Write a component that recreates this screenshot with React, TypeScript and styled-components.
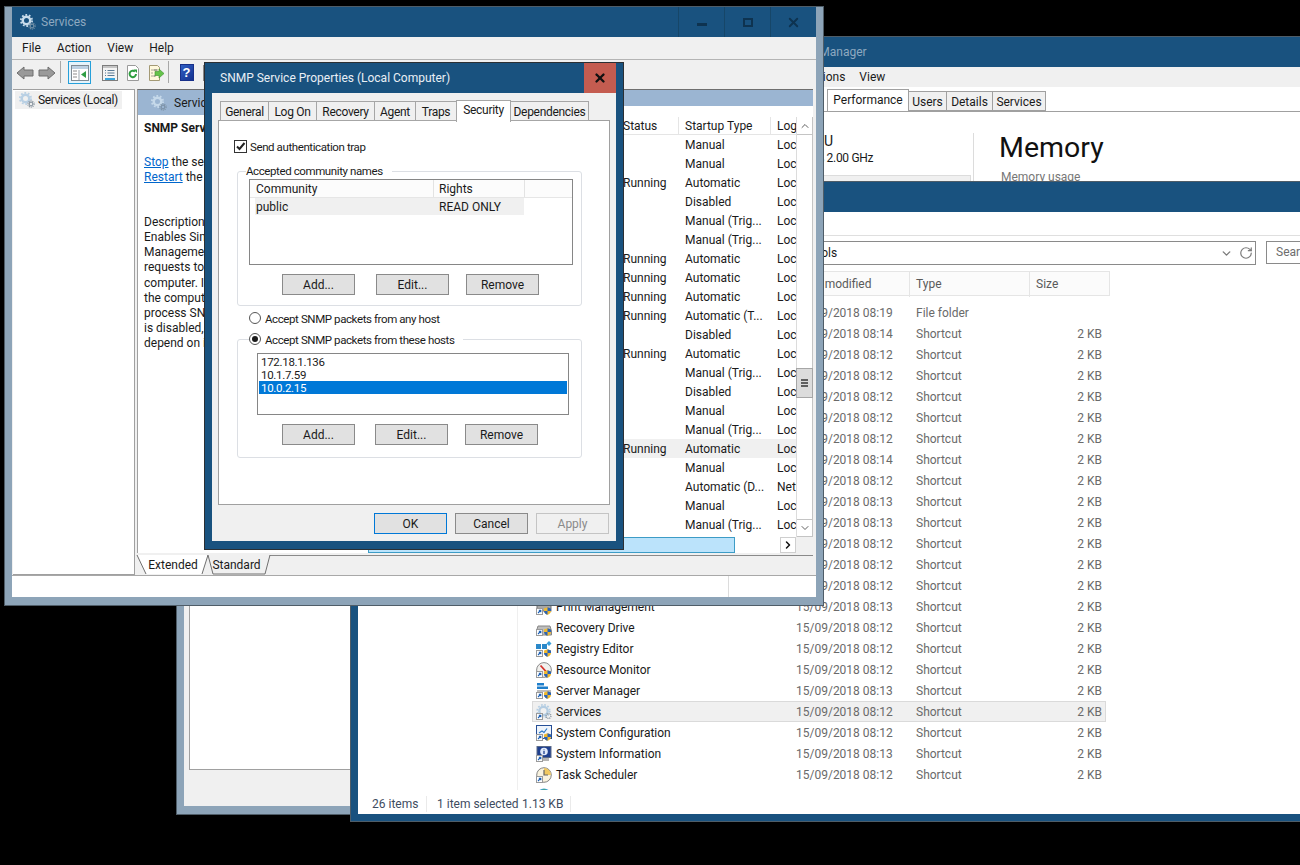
import React from 'react';
import styled, { createGlobalStyle } from 'styled-components';
import { ChevronUp, ChevronDown, ChevronRight, RotateCw, X } from 'lucide-react';

const FONT = `Roboto, "Noto Sans", sans-serif`;

const GlobalStyle = createGlobalStyle`
  html, body { margin: 0; padding: 0; background: #000; }
  * { box-sizing: border-box; }
  body { font-family: ${FONT}; font-size: 12px; color: #1a1a1a; }
`;

const BLUE = '#19527f';
const GREY_FRAME = '#8da4b8';

/* ---------- icons ---------- */

const Gears: React.FC<{ size?: number; big?: string; small?: string }> = ({ size = 16, big = '#b9d0e4', small = '#8e99a3' }) => (
  <svg width={size} height={size} viewBox="0 0 16 16" style={{ flex: 'none' }}>
    <circle cx="6.5" cy="6.5" r="5.6" fill="none" stroke={big} strokeWidth="1.8" strokeDasharray="1.7 1.82" />
    <circle cx="6.5" cy="6.5" r="3.7" fill="none" stroke={big} strokeWidth="2.4" />
    <circle cx="12" cy="12" r="3.1" fill="none" stroke={small} strokeWidth="1.2" strokeDasharray="1.1 0.85" />
    <circle cx="12" cy="12" r="1.8" fill="none" stroke={small} strokeWidth="1.2" />
  </svg>
);

const Arrow: React.FC<{ flip?: boolean }> = ({ flip }) => (
  <svg width="18" height="16" viewBox="0 0 18 16" style={flip ? { transform: 'scaleX(-1)' } : undefined}>
    <path d="M1 8 L8 2 V5 H17 V11 H8 V14 Z" fill="#9a9a9a" stroke="#6e6e6e" />
  </svg>
);

const TreeIcon = () => (
  <svg width="18" height="16" viewBox="0 0 18 16">
    <rect x="0.5" y="0.5" width="17" height="15" fill="#fff" stroke="#7f8a93" />
    <rect x="1" y="1" width="16" height="3" fill="#bcd0e2" />
    <path d="M2 6h4M2 9h4M2 12h4" stroke="#8d8d8d" />
    <path d="M8 5v10" stroke="#9aa5ad" />
    <path d="M15 6v7l-5-3.5z" fill="#2f9e44" />
  </svg>
);

const PropsIcon = () => (
  <svg width="16" height="16" viewBox="0 0 16 16">
    <rect x="0.5" y="0.5" width="15" height="15" fill="#f4f4f4" stroke="#7d7d7d" />
    <rect x="1" y="1" width="14" height="2" fill="#c5c5c5" />
    <path d="M3 5.5h1M5.5 5.5h7M3 8h1M5.5 8h7M3 10.5h1M5.5 10.5h7" stroke="#5b7a95" />
    <rect x="3" y="13" width="10" height="2" fill="#3aa5dd" />
  </svg>
);

const RefreshIcon = () => (
  <svg width="16" height="16" viewBox="0 0 16 16">
    <path d="M2.5 0.5h8l3 3v12h-11z" fill="#fff" stroke="#9a9a9a" />
    <path d="M11 9a3.2 3.2 0 1 1-1-2.4" fill="none" stroke="#2e9e3f" strokeWidth="2" />
    <path d="M8.5 4.5h3.5v3.5z" fill="#2e9e3f" />
  </svg>
);

const ExportIcon = () => (
  <svg width="17" height="16" viewBox="0 0 17 16">
    <path d="M1.5 0.5h8l2 2v13h-10z" fill="#fff9dd" stroke="#a49a75" />
    <path d="M3.5 5h1M5.5 5h4M3.5 8h1M3.5 11h1M5.5 11h2" stroke="#555" />
    <path d="M7 6.5h4V4l5 4.5L11 13v-2.500H7z" fill="#65c34a" stroke="#3d8f2f" strokeWidth="0.6" />
  </svg>
);

const HelpIcon = styled.span`
  display: block;
  width: 14px;
  height: 17px;
  background: linear-gradient(135deg, #2f5fc4, #14318f);
  border: 1px solid #18308a;
  color: #fff;
  font: bold 13px/15px "Liberation Sans", sans-serif;
  text-align: center;
`;

const SmallDoc = () => (
  <svg width="14" height="16" viewBox="0 0 14 16">
    <rect x="0.5" y="0.5" width="13" height="15" fill="#eee" stroke="#888" />
    <path d="M3 5h8M3 8h8M3 11h8" stroke="#999" />
  </svg>
);

const Overlay: React.FC<{ shield?: boolean }> = ({ shield = true }) => (
  <>
    <rect x="0.5" y="9.500" width="6" height="6" fill="#fff" stroke="#9a9a9a" />
    <path d="M2 14l2.500-2.500M2.800 11.300h2v2" fill="none" stroke="#1b5fb5" strokeWidth="1.100" />
    {shield && (
      <>
        <path d="M8 9.500l3.500-1.300L15 9.500v2.500c0 2-1.500 3-3.500 3.800C9.500 15 8 14 8 12z" fill="#f1b92c" />
        <path d="M11.500 8.200L15 9.500V12h-3.500zM11.500 12v3.800C9.500 15 8 14 8 12z" fill="#2a63b7" />
      </>
    )}
  </>
);

const FILE_ICONS: Record<string, React.ReactNode> = {
  print: (
    <>
      <path d="M3 3h10v3H3z" fill="#f5f5f5" stroke="#888" />
      <rect x="1" y="6" width="14" height="6" fill="#a6a6a6" stroke="#707070" />
      <Overlay />
    </>
  ),
  drive: (
    <>
      <path d="M2 6h12l1.500 5v4h-15v-4z" fill="#bdbdbd" stroke="#868686" />
      <Overlay />
    </>
  ),
  registry: (
    <>
      <path d="M0 3h5v5H0zM6 3h5v5H6zM0 9h5v5H0z" fill="#2a88c9" />
      <path d="M13 0l2.500 2.500L13 5l-2.500-2.500z" fill="#3ba0dc" />
      <Overlay />
    </>
  ),
  monitor: (
    <>
      <circle cx="8" cy="8" r="7.400" fill="#f1f1ee" stroke="#8b8b8b" />
      <path d="M4.500 3.500L10 9.500" stroke="#d4302a" strokeWidth="1.800" />
      <Overlay />
    </>
  ),
  server: (
    <>
      <rect x="1" y="0" width="7" height="2.500" fill="#1f7fcb" />
      <rect x="1" y="3.500" width="11" height="2.500" fill="#1f7fcb" />
      <rect x="1" y="7" width="14" height="2" fill="#bdbdbd" />
      <Overlay />
    </>
  ),
  gears: (
    <>
      <circle cx="7.500" cy="7" r="6.300" fill="none" stroke="#b4cde2" strokeWidth="1.600" strokeDasharray="1.700 1.600" />
      <circle cx="7.500" cy="7" r="4.200" fill="none" stroke="#b4cde2" strokeWidth="2.400" />
      <circle cx="12.500" cy="12" r="2.400" fill="none" stroke="#8e99a3" strokeWidth="1.400" strokeDasharray="1 0.700" />
      <Overlay shield={false} />
    </>
  ),
  config: (
    <>
      <rect x="0.500" y="0.500" width="15" height="13" fill="#eef4fb" stroke="#274f96" />
      <path d="M3 8l3-2 2 1.500 3-4" fill="none" stroke="#2a79c9" strokeWidth="1.200" />
      <Overlay />
    </>
  ),
  info: (
    <>
      <rect x="1" y="0.500" width="14" height="11" fill="#1e3f8f" stroke="#5a6a88" />
      <circle cx="8" cy="5.500" r="3.800" fill="#dfe9fa" />
      <path d="M8 3.500v.800M8 5v3" stroke="#1e3f8f" strokeWidth="1.300" />
      <rect x="3" y="12" width="10" height="3" fill="#b5b5b5" />
      <Overlay shield={false} />
    </>
  ),
  clock: (
    <>
      <circle cx="8" cy="8" r="7.300" fill="#f8f2de" stroke="#858585" />
      <path d="M8 1v7h7a7 7 0 0 0-7-7z" fill="#f0c860" />
      <path d="M8 3v5H12" fill="none" stroke="#666" strokeWidth="1.200" />
      <Overlay shield={false} />
    </>
  ),
  globe: (
    <>
      <circle cx="8" cy="8" r="7.500" fill="#3d9fd8" />
      <path d="M4 3c3-2 5-2 8 0-2 2-6 2-8 0z" fill="#4bb04a" />
    </>
  ),
};

/* ---------- windows ---------- */

const Desktop = styled.div`
  position: relative;
  width: 1300px;
  height: 865px;
  overflow: hidden;
  background: #000;
`;

const Window = styled.div<{ $frame?: string }>`
  position: absolute;
  display: flex;
  flex-direction: column;
  padding: 0 7px 8px;
  border: 1px solid #4f5d68;
  background: ${p => p.$frame ?? BLUE};
`;

const ServicesWindow = styled(Window)`
  left: 4px;
  top: 6px;
  width: 820px;
  height: 600px;
  z-index: 4;
`;

const DialogWindow = styled(Window)`
  left: 204px;
  top: 62px;
  width: 420px;
  height: 488px;
  z-index: 5;
  border-color: #2b2f33;
`;

const BackWindow = styled(Window)`
  left: 176px;
  top: 420px;
  width: 300px;
  height: 395px;
  z-index: 1;
`;

const TaskWindow = styled(Window)`
  left: 755px;
  top: 36px;
  width: 655px;
  height: 220px;
  z-index: 2;
`;

const ExplorerWindow = styled(Window)`
  left: 350px;
  top: 181px;
  width: 1050px;
  height: 641px;
  padding-bottom: 7px;
  z-index: 3;
`;

const TitleBar = styled.div<{ $active?: boolean }>`
  flex: none;
  display: flex;
  align-items: center;
  height: 30px;
  background: ${BLUE};
  color: ${p => (p.$active ? '#e9eff5' : '#8ea9c0')};
  padding-left: 8px;
`;

const TaskTitle = styled(TitleBar)`
  padding-left: 28px;
`;

const TitleIcon = styled.span`
  display: flex;
  margin-right: 5px;
`;

const TitleSpacer = styled.div`
  flex: 1;
`;

const CaptionButton = styled.div`
  width: 46px;
  height: 30px;
  display: flex;
  align-items: center;
  justify-content: center;
  border-left: 1px solid #164668;
  color: #0e3350;
`;

const MinGlyph = styled.span`
  display: block;
  width: 10px;
  height: 3px;
  margin-top: 4px;
  background: #0e3350;
`;

const MaxGlyph = styled.span`
  display: block;
  width: 10px;
  height: 9px;
  border: 2px solid #0e3350;
`;

const CloseButton = styled.div`
  width: 32px;
  height: 30px;
  display: flex;
  align-items: center;
  justify-content: center;
  background: #c45c50;
  color: #111;
`;

const Client = styled.div`
  flex: 1;
  min-height: 0;
  display: flex;
  flex-direction: column;
  background: #f0f0f0;
`;

/* ---------- back window ---------- */

const BackClient = styled(Client)`
  padding: 0 0 36px 5px;
`;

const BackPanel = styled.div`
  flex: 1;
  background: #fff;
  border: 1px solid #a0a0a0;
`;

/* ---------- services window ---------- */

const MenuBar = styled.div`
  flex: none;
  display: flex;
  align-items: center;
  height: 23px;
  padding-left: 10px;
  gap: 16px;
  background: #f0f0f0;
  border-bottom: 1px solid #b4b4b4;
`;

const Toolbar = styled.div`
  flex: none;
  display: flex;
  align-items: flex-start;
  height: 29px;
  padding: 1px 0 0 2px;
  background: #f0f0f0;
`;

const ToolSlot = styled.div<{ $w?: number; $ml?: number; $on?: boolean }>`
  flex: none;
  width: ${p => p.$w ?? 23}px;
  height: 23px;
  margin-left: ${p => p.$ml ?? 0}px;
  display: flex;
  align-items: center;
  justify-content: center;
  ${p => p.$on && 'background: #e5f3fb; border: 1px solid #26a0da;'}
`;

const ToolSep = styled.div<{ $ml: number }>`
  flex: none;
  width: 1px;
  height: 22px;
  margin-left: ${p => p.$ml}px;
  background: #a8a8a8;
`;

const MmcBody = styled.div`
  flex: 1;
  min-height: 0;
  display: flex;
  gap: 2px;
  padding-left: 1px;
`;

const TreePane = styled.div`
  flex: none;
  width: 122px;
  background: #fff;
  border: 1px solid #a0a0a0;
  border-width: 1px 1px 1px 0;
  padding: 1px 0 0 2px;
`;

const TreeItem = styled.div`
  display: flex;
  align-items: center;
  gap: 3px;
  width: 107px;
  height: 18px;
  padding-left: 4px;
  background: #f0f0f0;
  white-space: nowrap;
  letter-spacing: -0.35px;
`;

const ResultPane = styled.div`
  flex: 1;
  min-width: 0;
  display: flex;
  flex-direction: column;
  padding-right: 3px;
`;

const ResultInner = styled.div`
  flex: 1;
  min-height: 0;
  display: flex;
  background: #fff;
  border-left: 1px solid #a0a0a0;
  border-top: 1px solid #6f6f6f;
`;

const DescColumn = styled.div`
  flex: none;
  width: 222px;
  display: flex;
  flex-direction: column;
  overflow: hidden;
`;

const DescBand = styled.div`
  flex: none;
  display: flex;
  align-items: center;
  gap: 7px;
  height: 25px;
  padding-left: 13px;
  background: #9bb5d2;
  white-space: nowrap;
`;

const DescBody = styled.div`
  padding: 6px 6px 0;
  line-height: 15.100px;
  white-space: nowrap;
`;

const DescName = styled.div`
  font-weight: 700;
  height: 16px;
  margin-bottom: 18px;
`;

const DescLink = styled.a`
  color: #0066cc;
  text-decoration: underline;
`;

const DescGap = styled.div`
  height: 30px;
`;

const ListColumn = styled.div`
  flex: 1;
  min-width: 0;
  display: flex;
  flex-direction: column;
`;

const ListBand = styled.div`
  flex: none;
  height: 16px;
  background: #9bb5d2;
`;

const ListFrame = styled.div`
  flex: none;
  display: flex;
  height: 420px;
  margin-top: 11px;
`;

const ServiceTable = styled.div`
  flex: 1;
  min-width: 0;
`;

const ServiceRow = styled.div<{ $on?: boolean; $head?: boolean }>`
  display: grid;
  grid-template-columns: 257px 62px 92px 26px;
  align-items: center;
  height: ${p => (p.$head ? 18 : 19)}px;
  background: ${p => (p.$on ? '#f0f0f0' : 'transparent')};
  ${p => p.$head && 'border-bottom: 1px solid #e5e5e5;'}
`;

const ServiceCell = styled.div<{ $head?: boolean }>`
  overflow: hidden;
  white-space: nowrap;
  padding-left: 6px;
  line-height: 18px;
  ${p => p.$head && 'border-right: 1px solid #e5e5e5;'}
`;

const VScroll = styled.div`
  flex: none;
  width: 17px;
  display: flex;
  flex-direction: column;
  border-left: 1px solid #dcdcdc;
  border-right: 1px solid #c4c4c4;
`;

const ScrollBtn = styled.div`
  flex: none;
  height: 18px;
  display: flex;
  align-items: center;
  justify-content: center;
  color: #606060;
  border-bottom: 1px solid #c4c4c4;
`;

const ScrollDownBtn = styled(ScrollBtn)`
  border-bottom: 1px solid #c4c4c4;
  border-top: 1px solid #c4c4c4;
`;

const VTrack = styled.div`
  flex: 1;
  padding-top: 233px;
`;

const VThumb = styled.div`
  height: 30px;
  margin: 0 -1px;
  display: flex;
  flex-direction: column;
  align-items: center;
  justify-content: center;
  gap: 1px;
  background: #dcdcdc;
  border: 1px solid #a6a6a6;
`;

const Grip = styled.span`
  display: block;
  width: 7px;
  height: 2px;
  background: #606060;
`;

const HScroll = styled.div`
  flex: none;
  display: flex;
  align-items: stretch;
  height: 16px;
`;

const HThumb = styled.div`
  flex: none;
  width: 367px;
  margin-left: 8px;
  background: #bbe3fb;
  border: 1px solid #3d9cc6;
`;

const HBlank = styled.div`
  flex: 1;
`;

const HArrow = styled.div`
  flex: none;
  width: 16px;
  display: flex;
  align-items: center;
  justify-content: center;
  color: #111;
  background: #fff;
  border: 1px solid #cfcfcf;
`;

const HCorner = styled.div`
  flex: none;
  width: 17px;
  background: #f0f0f0;
`;

const ViewTabs = styled.div`
  flex: none;
  display: flex;
  height: 20px;
  margin-top: 2px;
  border-top: 1px solid #8a8a8a;
  background: #f0f0f0;
`;

const ViewTab = styled.div<{ $w: number; $ml?: number }>`
  position: relative;
  flex: none;
  width: ${p => p.$w}px;
  margin-left: ${p => p.$ml ?? 0}px;
  display: flex;
  align-items: center;
  justify-content: center;
  height: 20px;
  margin-top: -1px;
  svg { position: absolute; left: 0; top: 0; overflow: visible; }
  span { position: relative; }
`;

const MmcStatus = styled.div`
  flex: none;
  display: flex;
  justify-content: flex-end;
  height: 22px;
  background: #fff;
  border-top: 1px solid #a8a8a8;
  padding-right: 3px;
`;

const MmcStatusCell = styled.div`
  width: 85px;
  border-left: 1px solid #dcdcdc;
`;

/* ---------- dialog ---------- */

const DialogTabs = styled.div`
  flex: none;
  display: flex;
  align-items: flex-end;
  height: 28px;
  padding-left: 8px;
`;

const DialogTab = styled.div<{ $w: number; $on?: boolean }>`
  position: relative;
  z-index: ${p => (p.$on ? 2 : 0)};
  flex: none;
  width: ${p => p.$w}px;
  height: ${p => (p.$on ? 22 : 20)}px;
  margin-bottom: ${p => (p.$on ? -1 : 0)}px;
  margin-right: -1px;
  display: flex;
  align-items: ${p => (p.$on ? 'flex-start' : 'center')};
  justify-content: center;
  padding-top: 2px;
  letter-spacing: -0.3px;
  background: ${p => (p.$on ? '#fff' : '#f0f0f0')};
  border: 1px solid #a6a6a6;
  ${p => p.$on && 'border-bottom: 0;'}
`;

const DialogPanel = styled.div`
  flex: none;
  height: 385px;
  margin: -1px 6px 0;
  padding: 18px 0 0 15px;
  background: #fff;
  border: 1px solid #a0a0a0;
`;

const LabelText = styled.span`
  font-size: 11.5px;
  letter-spacing: -0.4px;
  padding-top: 1px;
  white-space: nowrap;
`;

const CheckRow = styled.label`
  display: flex;
  align-items: center;
  gap: 3px;
  height: 14px;
`;

const CheckBox = styled.span`
  display: block;
  flex: none;
  width: 13px;
  height: 13px;
  background: #fff;
  border: 1px solid #333;
`;

const Group = styled.fieldset<{ $mt: number; $pb: number }>`
  width: 345px;
  margin: ${p => p.$mt}px 0 0 3px;
  padding: 0 0 ${p => p.$pb}px 0;
  border: 1px solid #dcdfe4;
  border-radius: 3px;
  min-inline-size: 0;
`;

const Legend = styled.legend<{ $ml: number }>`
  margin-left: ${p => p.$ml}px;
  padding: 0 9px 0 0;
  line-height: 14px;
  height: 14px;
`;

const CommunityBox = styled.div`
  width: 324px;
  height: 86px;
  margin: 1px 0 0 11px;
  background: #fff;
  border: 1px solid #868686;
`;

const CommunityHead = styled.div`
  display: grid;
  grid-template-columns: 183px 91px 1fr;
  height: 18px;
  padding-left: 1px;
  border-bottom: 1px solid #e6e6e6;
  background: #fcfcfc;
`;

const HeadCell = styled.div`
  padding: 2px 0 0 5px;
  line-height: 15px;
  border-right: 1px solid #e3e3e3;
`;

const CommunityRow = styled.div`
  display: grid;
  grid-template-columns: 179px 90px;
  width: 269px;
  height: 17px;
  margin-left: 5px;
  line-height: 19px;
  background: #f0f0f0;
`;

const CommunityCell = styled.div`
  padding-left: 1px;
  &:last-child { padding-left: 5px; }
`;

const ButtonRow = styled.div<{ $mt: number }>`
  display: flex;
  margin: ${p => p.$mt}px 0 0 44px;
`;

const PushButton = styled.div<{ $ml?: number; $kind?: 'default' | 'disabled' }>`
  flex: none;
  width: 73px;
  height: 21px;
  margin-left: ${p => p.$ml ?? 0}px;
  display: flex;
  align-items: center;
  justify-content: center;
  background: ${p => (p.$kind === 'disabled' ? '#f0f0f0' : '#e1e1e1')};
  color: ${p => (p.$kind === 'disabled' ? '#8a8a8a' : '#1a1a1a')};
  border: 1px solid ${p => (p.$kind === 'default' ? '#0078d7' : p.$kind === 'disabled' ? '#c4c4c4' : '#8a8a8a')};
`;

const RadioRow = styled.label<{ $mt?: number; $ml?: number }>`
  display: flex;
  align-items: center;
  gap: 4px;
  height: 14px;
  margin: ${p => p.$mt ?? 0}px 0 0 ${p => p.$ml ?? 0}px;
`;

const Radio = styled.span<{ $on?: boolean }>`
  display: flex;
  flex: none;
  align-items: center;
  justify-content: center;
  width: 12px;
  height: 12px;
  border-radius: 50%;
  background: #fff;
  border: 1px solid #555;
  &::after {
    content: '';
    display: ${p => (p.$on ? 'block' : 'none')};
    width: 6px;
    height: 6px;
    border-radius: 50%;
    background: #1a1a1a;
  }
`;

const HostBox = styled.div`
  width: 312px;
  height: 62px;
  margin: 7px 0 0 19px;
  padding: 1px;
  background: #fff;
  border: 1px solid #868686;
`;

const HostItem = styled.div<{ $on?: boolean }>`
  height: 13px;
  padding-left: 2px;
  font-size: 11.5px;
  letter-spacing: -0.3px;
  line-height: 15px;
  background: ${p => (p.$on ? '#0078d7' : 'transparent')};
  color: ${p => (p.$on ? '#fff' : '#1a1a1a')};
`;

const DialogFoot = styled.div`
  flex: none;
  display: flex;
  justify-content: flex-end;
  gap: 8px;
  margin-top: 8px;
  padding-right: 7px;
`;

/* ---------- task manager ---------- */

const TaskMenu = styled(MenuBar)`
  height: 20px;
  border-bottom: 0;
  gap: 14px;
  padding-left: 8px;
`;

const TaskTabs = styled.div`
  flex: none;
  display: flex;
  align-items: flex-end;
  height: 25px;
  padding-left: 64px;
  background: #fff;
  border-bottom: 1px solid #a0a0a0;
`;

const TaskTab = styled.div<{ $w: number; $on?: boolean }>`
  position: relative;
  flex: none;
  width: ${p => p.$w}px;
  height: ${p => (p.$on ? 23 : 20)}px;
  margin-bottom: ${p => (p.$on ? -1 : 0)}px;
  margin-right: -1px;
  z-index: ${p => (p.$on ? 2 : 0)};
  display: flex;
  align-items: ${p => (p.$on ? 'flex-start' : 'center')};
  justify-content: center;
  padding-top: ${p => (p.$on ? 3 : 1)}px;
  background: ${p => (p.$on ? '#fff' : '#f0f0f0')};
  border: 1px solid #a0a0a0;
`;

const PerfBody = styled.div`
  flex: 1;
  display: flex;
  background: #fff;
`;

const PerfSide = styled.div`
  flex: none;
  width: 211px;
  padding-left: 55px;
  border-right: 1px solid #dcdcdc;
  margin-top: 21px;
`;

const PerfName = styled.div`
  font-size: 14px;
  line-height: 17px;
  margin-left: -12px;
`;

const PerfSpeed = styled.div`
  line-height: 16px;
  margin-left: -9px;
  letter-spacing: -0.3px;
  white-space: nowrap;
`;

const PerfGraph = styled.div`
  height: 30px;
  margin: 9px 2px 0 0;
  background: #f0f0f0;
  border: 1px solid #dcdcdc;
`;

const PerfMain = styled.div`
  padding: 17px 0 0 25px;
`;

const PerfHeading = styled.div`
  font-size: 28.5px;
  line-height: 38px;
  color: #111;
`;

const PerfSub = styled.div`
  margin: 3px 0 0 2px;
  color: #777;
`;

/* ---------- explorer ---------- */

const ExplorerClient = styled(Client)`
  background: #fff;
`;

const Ribbon = styled.div`
  flex: none;
  height: 24px;
  border-bottom: 1px solid #dfdfdf;
`;

const AddressRow = styled.div`
  flex: none;
  display: flex;
  align-items: flex-start;
  height: 35px;
  padding: 5px 0 0 342px;
`;

const AddressBox = styled.div`
  flex: none;
  width: 556px;
  height: 24px;
  display: flex;
  align-items: center;
  padding: 0 2px 0 27px;
  border: 1px solid #8a8a8a;
`;

const AddressTail = styled.div`
  display: flex;
  align-items: center;
  gap: 6px;
  margin-left: auto;
  color: #7a7a7a;
`;

const SearchBox = styled.div`
  flex: none;
  width: 200px;
  height: 23px;
  margin-left: 10px;
  padding-left: 9px;
  line-height: 21px;
  color: #6d6d6d;
  border: 1px solid #8a8a8a;
`;

const ColumnHead = styled.div`
  flex: none;
  display: grid;
  grid-template-columns: 119px 120px 81px;
  width: 320px;
  height: 25px;
  margin-left: 432px;
  background: #fbfbfb;
  border: 1px solid #e5e5e5;
  color: #5a5a5a;
`;

const ColumnCell = styled.div`
  padding-left: 6px;
  line-height: 25px;
  border-right: 1px solid #e5e5e5;
  &:last-child { border-right: 0; }
`;

const ExplorerBody = styled.div`
  flex: 1;
  min-height: 0;
  display: flex;
`;

const NavPane = styled.div`
  flex: none;
  width: 160px;
  border-right: 1px solid #efefef;
`;

const FileList = styled.div`
  flex: 1;
  min-width: 0;
  overflow: hidden;
  padding: 6px 0 0 14px;
`;

const FileRow = styled.div<{ $on?: boolean }>`
  display: grid;
  grid-template-columns: 263px 120px 120px 66px;
  align-items: center;
  width: 574px;
  height: 21px;
  border: 1px solid ${p => (p.$on ? '#dadada' : 'transparent')};
  background: ${p => (p.$on ? '#f0f0f0' : 'transparent')};
  white-space: nowrap;
`;

const FileName = styled.div`
  display: flex;
  align-items: center;
  gap: 4px;
  padding-left: 3px;
  height: 19px;
`;

const FileMeta = styled.div`
  color: #6a6a6a;
`;

const FileSize = styled(FileMeta)`
  text-align: right;
`;

const ExplorerStatus = styled.div`
  flex: none;
  display: flex;
  align-items: center;
  height: 24px;
  padding: 4px 0 0 14px;
  color: #3e4c5f;
`;

const StatusText = styled.span<{ $w: number }>`
  flex: none;
  width: ${p => p.$w}px;
`;

const StatusSep = styled.span<{ $mr: number }>`
  flex: none;
  width: 1px;
  height: 16px;
  margin-right: ${p => p.$mr}px;
  background: #eaeaea;
`;

/* ---------- data ---------- */

const SERVICES: [string, string, string, boolean?][] = [
  ['', 'Manual', 'Local Service'],
  ['', 'Manual', 'Local Service'],
  ['Running', 'Automatic', 'Local Service'],
  ['', 'Disabled', 'Local Service'],
  ['', 'Manual (Trig...', 'Local Service'],
  ['', 'Manual (Trig...', 'Local Service'],
  ['Running', 'Automatic', 'Local Service'],
  ['Running', 'Automatic', 'Local Service'],
  ['Running', 'Automatic', 'Local Service'],
  ['Running', 'Automatic (T...', 'Local Service'],
  ['', 'Disabled', 'Local Service'],
  ['Running', 'Automatic', 'Local Service'],
  ['', 'Manual (Trig...', 'Local Service'],
  ['', 'Disabled', 'Local Service'],
  ['', 'Manual', 'Local Service'],
  ['', 'Manual (Trig...', 'Local Service'],
  ['Running', 'Automatic', 'Local Service', true],
  ['', 'Manual', 'Local Service'],
  ['', 'Automatic (D...', 'Network Service'],
  ['', 'Manual', 'Local Service'],
  ['', 'Manual (Trig...', 'Local Service'],
];

type FileEntry = { name?: string; icon?: string; time: string; on?: boolean };

const FILES: FileEntry[] = [
  { time: '08:14' }, { time: '08:12' }, { time: '08:12' }, { time: '08:12' }, { time: '08:12' },
  { time: '08:12' }, { time: '08:14' }, { time: '08:12' }, { time: '08:13' }, { time: '08:13' },
  { time: '08:12' }, { time: '08:12' }, { time: '08:12' },
  { name: 'Print Management', icon: 'print', time: '08:13' },
  { name: 'Recovery Drive', icon: 'drive', time: '08:12' },
  { name: 'Registry Editor', icon: 'registry', time: '08:12' },
  { name: 'Resource Monitor', icon: 'monitor', time: '08:12' },
  { name: 'Server Manager', icon: 'server', time: '08:13' },
  { name: 'Services', icon: 'gears', time: '08:12', on: true },
  { name: 'System Configuration', icon: 'config', time: '08:12' },
  { name: 'System Information', icon: 'info', time: '08:13' },
  { name: 'Task Scheduler', icon: 'clock', time: '08:12' },
];

const DIALOG_TABS: [string, number, boolean?][] = [
  ['General', 49], ['Log On', 49], ['Recovery', 59], ['Agent', 42], ['Traps', 42], ['Security', 55, true], ['Dependencies', 79],
];

const App: React.FC = () => (
  <Desktop>
    <GlobalStyle />

    <BackWindow $frame={GREY_FRAME}>
      <BackClient>
        <BackPanel />
      </BackClient>
    </BackWindow>

    <TaskWindow>
      <TaskTitle>Task Manager</TaskTitle>
      <Client>
        <TaskMenu>
          <span>File</span>
          <span>Options</span>
          <span>View</span>
        </TaskMenu>
        <TaskTabs>
          <TaskTab $w={82} $on>Performance</TaskTab>
          <TaskTab $w={39}>Users</TaskTab>
          <TaskTab $w={47}>Details</TaskTab>
          <TaskTab $w={54}>Services</TaskTab>
        </TaskTabs>
        <PerfBody>
          <PerfSide>
            <PerfName>CPU</PerfName>
            <PerfSpeed>2% 2.00 GHz</PerfSpeed>
            <PerfGraph />
          </PerfSide>
          <PerfMain>
            <PerfHeading>Memory</PerfHeading>
            <PerfSub>Memory usage</PerfSub>
          </PerfMain>
        </PerfBody>
      </Client>
    </TaskWindow>

    <ExplorerWindow>
      <TitleBar />
      <ExplorerClient>
        <Ribbon />
        <AddressRow>
          <AddressBox>
            Administrative Tools
            <AddressTail>
              <ChevronDown size={13} strokeWidth={2.5} />
              <RotateCw size={14} />
            </AddressTail>
          </AddressBox>
          <SearchBox>Search Administrative Tools</SearchBox>
        </AddressRow>
        <ColumnHead>
          <ColumnCell>Date modified</ColumnCell>
          <ColumnCell>Type</ColumnCell>
          <ColumnCell>Size</ColumnCell>
        </ColumnHead>
        <ExplorerBody>
          <NavPane />
          <FileList>
            <FileRow>
              <FileName />
              <FileMeta>15/09/2018 08:19</FileMeta>
              <FileMeta>File folder</FileMeta>
              <FileSize />
            </FileRow>
            {FILES.map((f, i) => (
              <FileRow key={i} $on={f.on}>
                <FileName>
                  {f.icon && (
                    <svg width="16" height="16" viewBox="0 0 16 16" style={{ flex: 'none' }}>
                      {FILE_ICONS[f.icon]}
                    </svg>
                  )}
                  {f.name}
                </FileName>
                <FileMeta>15/09/2018 {f.time}</FileMeta>
                <FileMeta>Shortcut</FileMeta>
                <FileSize>2 KB</FileSize>
              </FileRow>
            ))}
            <FileRow>
              <FileName>
                <svg width="16" height="16" viewBox="0 0 16 16" style={{ flex: 'none' }}>
                  {FILE_ICONS.globe}
                </svg>
              </FileName>
            </FileRow>
          </FileList>
        </ExplorerBody>
        <ExplorerStatus>
          <StatusText $w={54}>26 items</StatusText>
          <StatusSep $mr={10} />
          <StatusText $w={85}>1 item selected</StatusText>
          <StatusText $w={48}>1.13 KB</StatusText>
          <StatusSep $mr={0} />
        </ExplorerStatus>
      </ExplorerClient>
    </ExplorerWindow>

    <ServicesWindow $frame={GREY_FRAME}>
      <TitleBar>
        <TitleIcon><Gears big="#c9dceb" small="#6f8ea6" /></TitleIcon>
        Services
        <TitleSpacer />
        <CaptionButton><MinGlyph /></CaptionButton>
        <CaptionButton><MaxGlyph /></CaptionButton>
        <CaptionButton><X size={15} strokeWidth={3} /></CaptionButton>
      </TitleBar>
      <Client>
        <MenuBar>
          <span>File</span>
          <span>Action</span>
          <span>View</span>
          <span>Help</span>
        </MenuBar>
        <Toolbar>
          <ToolSlot $w={22}><Arrow /></ToolSlot>
          <ToolSlot $w={22}><Arrow flip /></ToolSlot>
          <ToolSep $ml={2} />
          <ToolSlot $ml={7} $on><TreeIcon /></ToolSlot>
          <ToolSlot $ml={7}><PropsIcon /></ToolSlot>
          <ToolSlot><RefreshIcon /></ToolSlot>
          <ToolSlot $ml={1}><ExportIcon /></ToolSlot>
          <ToolSep $ml={0} />
          <ToolSlot $ml={6}><HelpIcon>?</HelpIcon></ToolSlot>
          <ToolSlot><SmallDoc /></ToolSlot>
        </Toolbar>
        <MmcBody>
          <TreePane>
            <TreeItem>
              <Gears />
              Services (Local)
            </TreeItem>
          </TreePane>
          <ResultPane>
            <ResultInner>
              <DescColumn>
                <DescBand>
                  <Gears big="#c6d9ea" small="#7d93a8" />
                  Services
                </DescBand>
                <DescBody>
                  <DescName>SNMP Service</DescName>
                  <div><DescLink>Stop</DescLink> the service</div>
                  <div><DescLink>Restart</DescLink> the service</div>
                  <DescGap />
                  <div>Description:</div>
                  <div>Enables Simple Network</div>
                  <div>Management Protocol (SNMP)</div>
                  <div>requests to be processed by this</div>
                  <div>computer. If this service is stopped,</div>
                  <div>the computer will be unable to</div>
                  <div>process SNMP requests. If this service</div>
                  <div>is disabled, any services that explicitly</div>
                  <div>depend on it will fail to start.</div>
                </DescBody>
              </DescColumn>
              <ListColumn>
                <ListBand />
                <ListFrame>
                  <ServiceTable>
                    <ServiceRow $head>
                      <ServiceCell />
                      <ServiceCell $head>Status</ServiceCell>
                      <ServiceCell $head>Startup Type</ServiceCell>
                      <ServiceCell>Log On As</ServiceCell>
                    </ServiceRow>
                    {SERVICES.map(([status, startup, logon, on], i) => (
                      <ServiceRow key={i} $on={on}>
                        <ServiceCell />
                        <ServiceCell>{status}</ServiceCell>
                        <ServiceCell>{startup}</ServiceCell>
                        <ServiceCell>{logon}</ServiceCell>
                      </ServiceRow>
                    ))}
                  </ServiceTable>
                  <VScroll>
                    <ScrollBtn><ChevronUp size={12} /></ScrollBtn>
                    <VTrack>
                      <VThumb><Grip /><Grip /><Grip /></VThumb>
                    </VTrack>
                    <ScrollDownBtn><ChevronDown size={12} /></ScrollDownBtn>
                  </VScroll>
                </ListFrame>
                <HScroll>
                  <HThumb />
                  <HBlank />
                  <HArrow><ChevronRight size={12} strokeWidth={3} /></HArrow>
                  <HCorner />
                </HScroll>
              </ListColumn>
            </ResultInner>
            <ViewTabs>
              <ViewTab $w={72}>
                <svg width="72" height="20" viewBox="0 0 72 20">
                  <path d="M0 0 L9 19 H65 L71 0 Z" fill="#fff" />
                  <path d="M0 0 L9 19 M65 19 L71 0" stroke="#707070" fill="none" />
                </svg>
                <span>Extended</span>
              </ViewTab>
              <ViewTab $w={59} $ml={-2}>
                <svg width="64" height="20" viewBox="0 0 64 20">
                  <path d="M1 0 L6 19 H58 L63 0" stroke="#707070" fill="#f0f0f0" />
                </svg>
                <span>Standard</span>
              </ViewTab>
            </ViewTabs>
          </ResultPane>
        </MmcBody>
        <MmcStatus>
          <MmcStatusCell />
        </MmcStatus>
      </Client>
    </ServicesWindow>

    <DialogWindow>
      <TitleBar $active>
        SNMP Service Properties (Local Computer)
        <TitleSpacer />
        <CloseButton><X size={14} strokeWidth={4} /></CloseButton>
      </TitleBar>
      <Client>
        <DialogTabs>
          {DIALOG_TABS.map(([label, w, on]) => (
            <DialogTab key={label} $w={w} $on={on}>{label}</DialogTab>
          ))}
        </DialogTabs>
        <DialogPanel>
          <CheckRow>
            <CheckBox>
              <svg width="11" height="11" viewBox="0 0 11 11">
                <path d="M2 5.500L4.500 8 9.500 2" fill="none" stroke="#222" strokeWidth="2" />
              </svg>
            </CheckBox>
            <LabelText>Send authentication trap</LabelText>
          </CheckRow>
          <Group $mt={11} $pb={10}>
            <Legend $ml={8}><LabelText>Accepted community names</LabelText></Legend>
            <CommunityBox>
              <CommunityHead>
                <HeadCell>Community</HeadCell>
                <HeadCell>Rights</HeadCell>
                <div />
              </CommunityHead>
              <CommunityRow>
                <CommunityCell>public</CommunityCell>
                <CommunityCell>READ ONLY</CommunityCell>
              </CommunityRow>
            </CommunityBox>
            <ButtonRow $mt={9}>
              <PushButton>Add...</PushButton>
              <PushButton $ml={21}>Edit...</PushButton>
              <PushButton $ml={17}>Remove</PushButton>
            </ButtonRow>
          </Group>
          <RadioRow $mt={5} $ml={15}>
            <Radio />
            <LabelText>Accept SNMP packets from any host</LabelText>
          </RadioRow>
          <Group $mt={7} $pb={12}>
            <Legend $ml={11}>
              <RadioRow>
                <Radio $on />
                <LabelText>Accept SNMP packets from these hosts</LabelText>
              </RadioRow>
            </Legend>
            <HostBox>
              <HostItem>172.18.1.136</HostItem>
              <HostItem>10.1.7.59</HostItem>
              <HostItem $on>10.0.2.15</HostItem>
            </HostBox>
            <ButtonRow $mt={9}>
              <PushButton>Add...</PushButton>
              <PushButton $ml={20}>Edit...</PushButton>
              <PushButton $ml={17}>Remove</PushButton>
            </ButtonRow>
          </Group>
        </DialogPanel>
        <DialogFoot>
          <PushButton $kind="default">OK</PushButton>
          <PushButton>Cancel</PushButton>
          <PushButton $kind="disabled">Apply</PushButton>
        </DialogFoot>
      </Client>
    </DialogWindow>
  </Desktop>
);

export default App;
